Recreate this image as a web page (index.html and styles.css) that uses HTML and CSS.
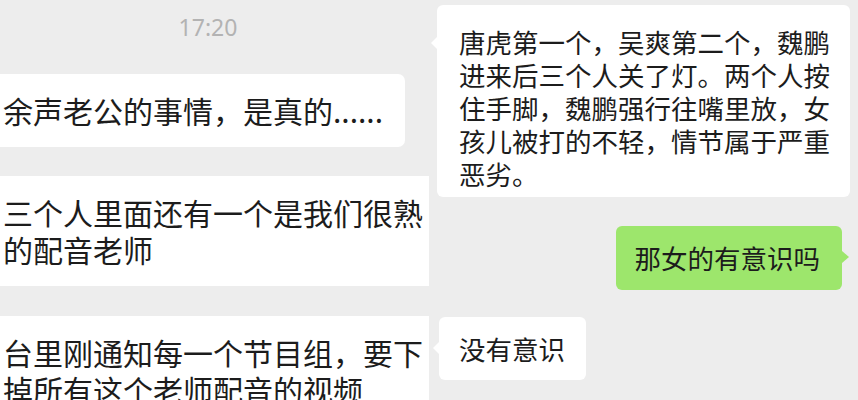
FILE: index.html
```html
<!DOCTYPE html>
<html lang="zh-CN">
<head>
<meta charset="utf-8">
<link rel="stylesheet" href="styles.css">
</head>
<body>
<div class="page">
  <section class="panel panel-left">
    <div class="time">17:20</div>
    <div class="lbubble lbubble-short">余声老公的事情，是真的......</div>
    <div class="lbubble lbubble-wide">三个人里面还有一个是我们很熟<br>的配音老师</div>
    <div class="lbubble lbubble-wide">台里刚通知每一个节目组，要下<br>掉所有这个老师配音的视频</div>
  </section>
  <section class="panel panel-right">
    <div class="rbubble in first">唐虎第一个，吴爽第二个，魏鹏<br>进来后三个人关了灯。两个人按<br>住手脚，魏鹏强行往嘴里放，女<br>孩儿被打的不轻，情节属于严重<br>恶劣。</div>
    <div class="rbubble out">那女的有意识吗</div>
    <div class="rbubble in last">没有意识</div>
  </section>
</div>
</body>
</html>
```
FILE: styles.css
```css
html, body {
  margin: 0;
  padding: 0;
}
body {
  background: #ededed;
  font-family: "Noto Sans CJK SC", "Noto Sans", sans-serif;
  color: #1c1c1c;
  width: 858px;
  height: 400px;
  overflow: hidden;
}
.page {
  display: flex;
  height: 400px;
}
.panel {
  display: flex;
  flex-direction: column;
}
.panel-left {
  width: 429px;
  flex: none;
  padding-top: 12px;
  box-sizing: border-box;
}
.time {
  font-family: "Noto Sans", sans-serif;
  font-size: 23px;
  line-height: 30px;
  height: 30px;
  color: #b3b3b3;
  text-align: center;
  padding-right: 13px;
  margin-bottom: 32px;
}
.lbubble {
  background: #ffffff;
  font-size: 30px;
  line-height: 37px;
  padding: 18px 6px 18px 3px;
  white-space: nowrap;
}
.lbubble-short {
  align-self: flex-start;
  width: 380px;
  box-sizing: border-box;
  width: 405px;
  border-radius: 0 7px 7px 0;
  margin-bottom: 29px;
}
.lbubble-wide {
  margin-bottom: 30px;
}
.panel-right {
  flex: 1;
  padding-top: 5px;
}
.rbubble {
  position: relative;
  font-size: 26.5px;
  line-height: 33px;
  border-radius: 6px;
  white-space: nowrap;
}
.rbubble.in {
  background: #ffffff;
  align-self: flex-start;
}
.rbubble.in::before {
  content: "";
  position: absolute;
  left: -6px;
  width: 0;
  height: 0;
  border-top: 6px solid transparent;
  border-bottom: 6px solid transparent;
  border-right: 6px solid #ffffff;
}
.rbubble.first {
  margin-left: 8px;
  padding: 20px 20px 7px 22px;
  margin-bottom: 29px;
}
.rbubble.first::before {
  top: 32px;
}
.rbubble.out {
  background: #9de66c;
  align-self: flex-end;
  margin-right: 16px;
  padding: 15px 22px 16px 19px;
  margin-bottom: 27px;
}
.rbubble.out::after {
  content: "";
  position: absolute;
  right: -7px;
  top: 25px;
  width: 0;
  height: 0;
  border-top: 6px solid transparent;
  border-bottom: 6px solid transparent;
  border-left: 7px solid #9de66c;
}
.rbubble.last {
  margin-left: 10px;
  padding: 15px 21px 15px 20px;
}
.rbubble.last::before {
  top: 25px;
}
```
